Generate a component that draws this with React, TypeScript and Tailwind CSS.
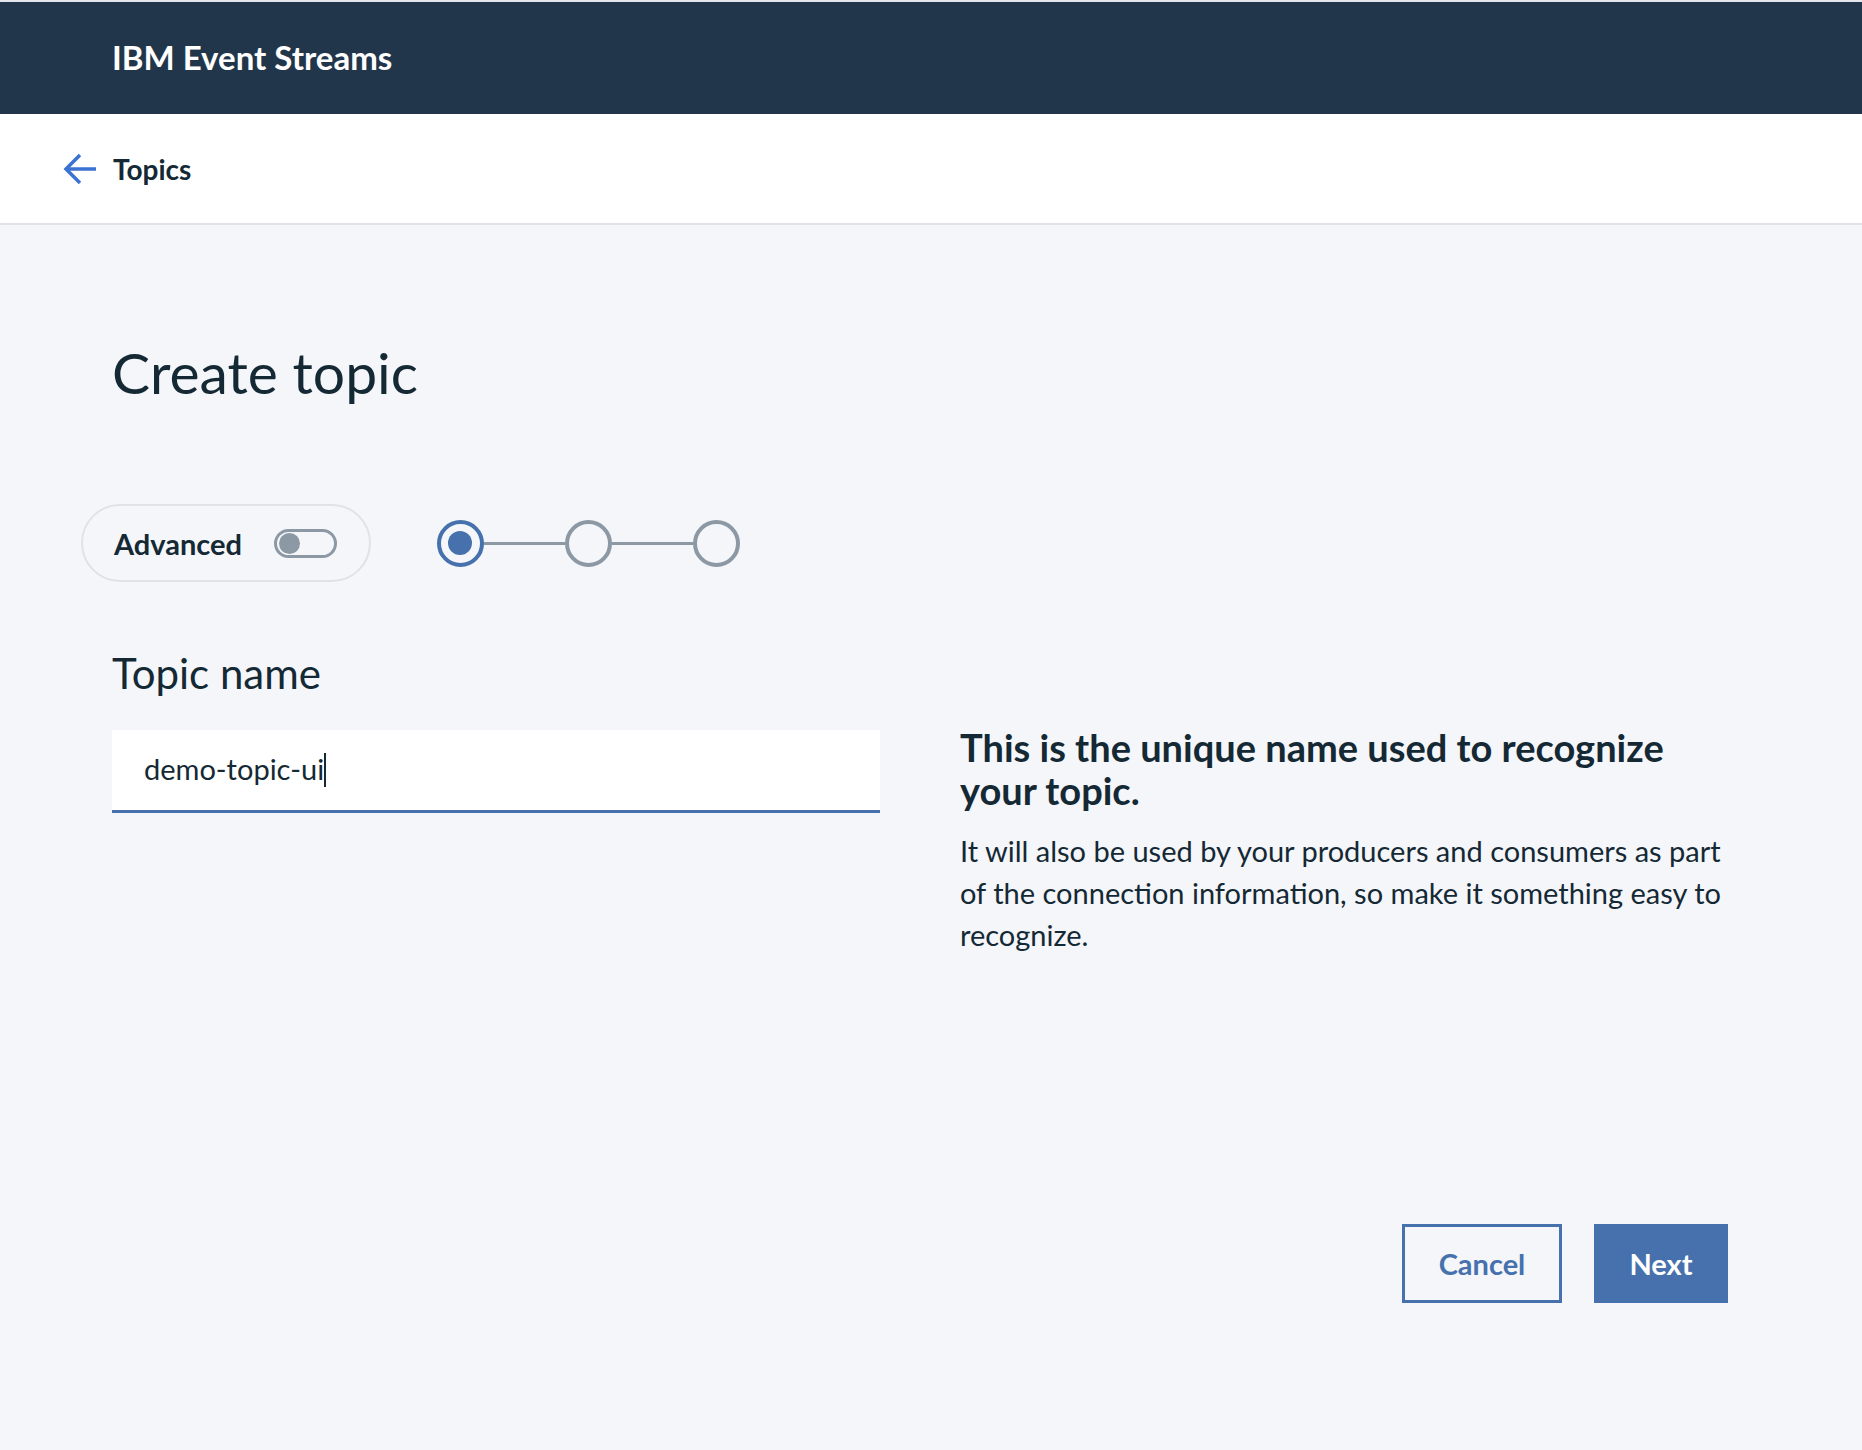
import React from "react";

const Stepper = () => {
  return (
    <div className="flex items-center ml-[66px]">
      <div className="w-[47px] h-[47px] rounded-full border-[4px] border-[#4671ad] flex items-center justify-center">
        <div className="w-[24px] h-[24px] rounded-full bg-[#4671ad]" />
      </div>
      <div className="w-[81px] h-[3px] bg-[#8c98a4]" />
      <div className="w-[47px] h-[47px] rounded-full border-[4px] border-[#8c98a4]" />
      <div className="w-[81px] h-[3px] bg-[#8c98a4]" />
      <div className="w-[47px] h-[47px] rounded-full border-[4px] border-[#8c98a4]" />
    </div>
  );
};

const App = () => {
  return (
    <div className="min-h-screen bg-[#f4f6fa] font-['Lato',sans-serif] text-[#152935]">
      <header className="h-[114px] bg-[#22364b] border-t-2 border-[#e4e6ea] flex items-center px-[112px]">
        <span className="text-white text-[33px] font-bold">IBM Event Streams</span>
      </header>

      <div className="h-[111px] bg-white border-b-2 border-[#e0e3e8] flex items-center pl-[62px]">
        <svg width="35" height="32" viewBox="0 0 35 32" fill="none" stroke="#3c72d2" strokeWidth="3.5">
          <path d="M4 16 H34" />
          <path d="M18 2 L4 16 L18 30" />
        </svg>
        <span className="ml-[16px] text-[28px] font-bold">Topics</span>
      </div>

      <main className="pl-[112px] pr-[134px] pt-[113px]">
        <h1 className="text-[57px] leading-[1.2] font-normal">Create topic</h1>

        <div className="flex items-center mt-[98px]">
          <div className="-ml-[31px] h-[78px] rounded-full border-2 border-[#e0e2e6] flex items-center pl-[31px] pr-[32px] gap-[32px]">
            <span className="text-[29px] font-bold">Advanced</span>
            <div className="w-[63px] h-[29px] rounded-full border-[3px] border-[#8c98a4] flex items-center pl-[2px]">
              <div className="w-[21px] h-[21px] rounded-full bg-[#8c98a4]" />
            </div>
          </div>
          <Stepper />
        </div>

        <label className="block mt-[66px] text-[42px] leading-[1.2]">Topic name</label>

        <div className="grid grid-cols-2 gap-[80px] mt-[31px]">
          <div className="h-[83px] bg-white border-b-[3px] border-[#4671ad] pl-[32px] pt-[22px]">
            <span className="text-[29px] leading-[1.2]">demo-topic-ui</span>
            <span className="inline-block w-[2px] h-[34px] bg-[#152935] align-[-7px]" />
          </div>
          <div className="-mt-[4px]">
            <h2 className="text-[38px] leading-[43px] font-bold">
              This is the unique name used to recognize your topic.
            </h2>
            <p className="mt-[18px] text-[29px] leading-[42px]">
              It will also be used by your producers and consumers as part of the connection
              information, so make it something easy to recognize.
            </p>
          </div>
        </div>

        <div className="flex justify-end gap-[32px] mt-[268px]">
          <button className="w-[160px] h-[79px] border-[3px] border-[#4671ad] text-[#4671ad] text-[29px] font-bold">
            Cancel
          </button>
          <button className="w-[134px] h-[79px] bg-[#4671ad] text-white text-[29px] font-bold">
            Next
          </button>
        </div>
      </main>
    </div>
  );
};

export default App;
